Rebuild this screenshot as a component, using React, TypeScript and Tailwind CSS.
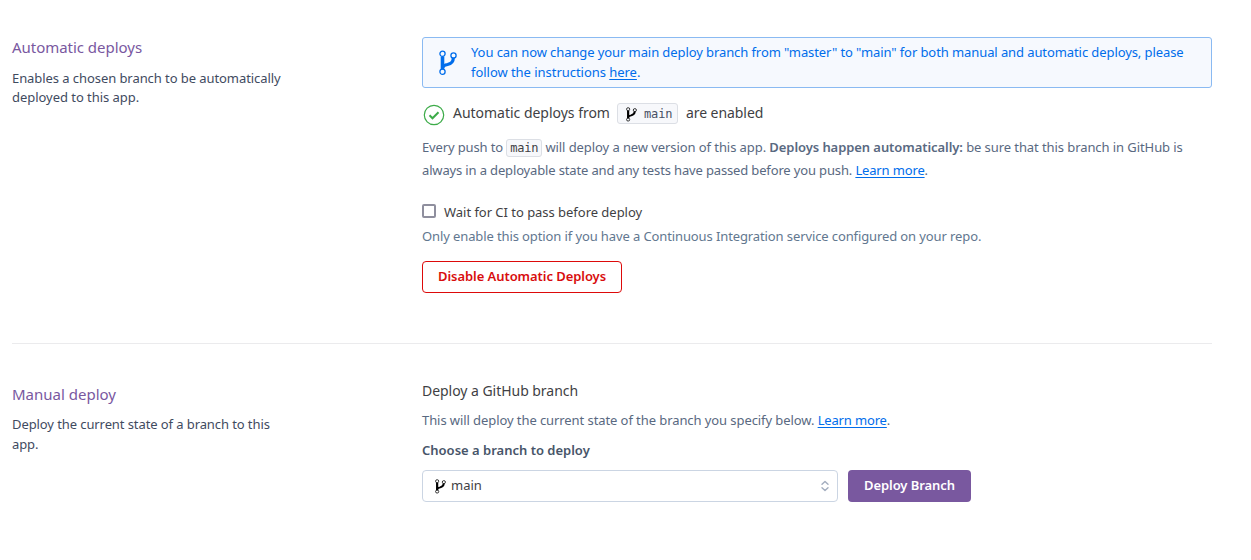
import React from "react";

function Branch({ className }: { className: string }) {
  return (
    <svg viewBox="0 0 18 26" preserveAspectRatio="none" className={className} fill="none" stroke="currentColor" aria-hidden="true">
      <path d="M3.500 6.500v13" strokeWidth="3.600" />
      <path d="M14.300 8c0 4.800-2.800 5.800-5.800 6.500-2.500.500-4.200 1.200-5 3" strokeWidth="3.200" />
      <circle cx="3.500" cy="3.800" r="2.600" strokeWidth="1.300" />
      <circle cx="14.500" cy="5.400" r="2.600" strokeWidth="1.300" />
      <circle cx="3.500" cy="21.800" r="2.600" strokeWidth="1.300" />
    </svg>
  );
}

function Link({ children }: { children: React.ReactNode }) {
  return (
    <a href="#" className="text-[#006deb] underline underline-offset-2">
      {children}
    </a>
  );
}

export default function App() {
  return (
    <main className="h-[560px] w-[1251px] overflow-hidden bg-white pl-3 font-['Noto_Sans',sans-serif] text-[13px] text-[#596981]">
      <section className="flex h-[344px] w-[1200px] border-b border-[#ebebed] pt-[37px]">
        <div className="w-[410px] shrink-0 text-[#3f4b5f]">
          <h2 className="-mt-px text-[15px] leading-[22px] tracking-[-0.03px] text-[#79589f]">Automatic deploys</h2>
          <p className="mt-[11px] leading-[19px] tracking-[-0.07px] whitespace-nowrap">
            Enables a chosen branch to be automatically
            <br />
            <span className="tracking-[-0.04px]">deployed to this app.</span>
          </p>
        </div>
        <div className="w-[790px]">
          <div className="flex h-[51px] rounded-[3px] border border-[#8abaf2] bg-[#f6f9fe] pl-4 text-[#006deb]">
            <Branch className="mt-[12px] h-[26px] w-[18px]" />
            <p className="ml-[14px] pt-1 leading-5 whitespace-nowrap">
              <span className="tracking-[-0.09px]">You can now change your main deploy branch from "master" to "main" for both manual and automatic deploys, please</span>
              <br />
              <span className="tracking-[-0.04px]">follow the instructions <Link>here</Link>.</span>
            </p>
          </div>
          <div className="mt-[15px] flex h-[21px] items-center text-[14px] whitespace-nowrap text-[#3f3f44]">
            <svg viewBox="0 0 22 22" className="mt-[2px] ml-[1px] size-[22px]" fill="none" stroke="#3cab48">
              <circle cx="11" cy="11" r="9.700" strokeWidth="1.200" />
              <path d="m6.500 11.300 3 3 6-6" strokeWidth="2" />
            </svg>
            <span className="mb-[2px] ml-2 w-[157px] tracking-[-0.02px]">Automatic deploys from</span>
            <span className="ml-[7px] flex h-[21px] w-[61px] items-center rounded-[3px] border border-[#dcdfe5] bg-[#f7f8fb] pl-[8px] font-['DejaVu_Sans_Mono',monospace] text-[12px] tracking-[-0.1px] text-[#475064]">
              <Branch className="mt-[2px] h-[15px] w-[11px] text-black" />
              <span className="ml-[7px]">main</span>
            </span>
            <span className="mb-[2px] ml-2 tracking-[-0.07px]">are enabled</span>
          </div>
          <p className="mt-[12px] h-[46px] leading-[23px] whitespace-nowrap">
            <span className="tracking-[-0.14px]">Every push to </span>
            <span className="rounded-[3px] border border-[#dcdfe5] bg-[#f7f8fb] px-[3px] py-px font-['DejaVu_Sans_Mono',monospace] text-[12px] tracking-[-0.25px] text-[#3f3f44]">main</span>
            <span className="tracking-[-0.08px]"> will deploy a new version of this app. </span>
            <b className="font-semibold tracking-[-0.07px]">Deploys happen automatically:</b>
            <span className="tracking-[-0.08px]"> be sure that this branch in GitHub is</span>
            <br />
            <span className="relative -top-px tracking-[-0.147px]">
              always in a deployable state and any tests have passed before you push. <Link>Learn more</Link>.
            </span>
          </p>
          <label className="mt-[21px] flex h-5 items-center tracking-[-0.03px] text-[#3f3f44]">
            <span className="mb-1 size-[14px] rounded-[2px] border-2 border-[#8f8f9e]" />
            <span className="ml-2">Wait for CI to pass before deploy</span>
          </label>
          <p className="mt-[3px] leading-5 tracking-[-0.11px] whitespace-nowrap text-[#62778f]">Only enable this option if you have a Continuous Integration service configured on your repo.</p>
          <button className="mt-[15px] block h-8 w-[200px] rounded-[4px] border border-[#dd0a0a] pb-px font-semibold tracking-[-0.06px] whitespace-nowrap text-[#d80d0d]">Disable Automatic Deploys</button>
        </div>
      </section>
      <section className="flex w-[1200px] pt-[37px]">
        <div className="w-[410px] shrink-0 pt-[2px] text-[#3f4b5f]">
          <h2 className="text-[15px] leading-[22px] text-[#79589f]">Manual deploy</h2>
          <p className="mt-[9px] leading-5 tracking-[-0.09px] whitespace-nowrap">
            Deploy the current state of a branch to this
            <br />
            app.
          </p>
        </div>
        <div className="w-[790px]">
          <h3 className="text-[14px] leading-5 tracking-[-0.04px] text-[#3f3f44]">Deploy a GitHub branch</h3>
          <p className="mt-[9px] leading-5 tracking-[-0.08px] whitespace-nowrap">
            This will deploy the current state of the branch you specify below. <span className="tracking-[-0.15px]"><Link>Learn more</Link></span>.
          </p>
          <p className="mt-[10px] leading-5 font-semibold text-[#475569]">Choose a branch to deploy</p>
          <div className="mt-[10px] flex">
            <div className="flex h-8 w-[416px] items-center rounded-[4px] border border-[#cbd5e3] pl-[12px] text-[#3f3f44]">
              <Branch className="h-[15px] w-[11px] text-black" />
              <span className="mb-px ml-[5px]">main</span>
              <svg viewBox="0 0 8 12" className="mr-2 ml-auto h-3 w-2" fill="none" stroke="#a3adbf" strokeWidth="1.400" strokeLinecap="round" strokeLinejoin="round">
                <path d="M1 4.300 4 1.500l3 2.800M1 7.700l3 2.800 3-2.800" />
              </svg>
            </div>
            <button className="ml-[10px] h-8 w-[123px] rounded-[4px] bg-[#79589f] pb-px font-semibold tracking-[-0.06px] whitespace-nowrap text-white">Deploy Branch</button>
          </div>
        </div>
      </section>
    </main>
  );
}
